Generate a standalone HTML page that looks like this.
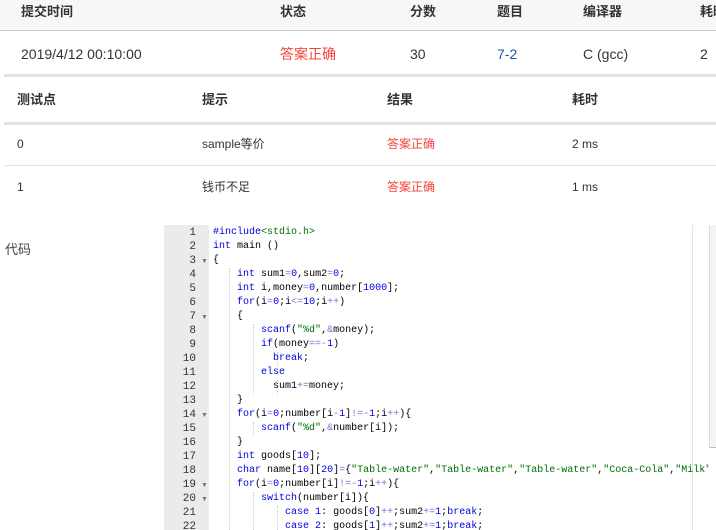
<!DOCTYPE html>
<html><head><meta charset="utf-8"><style>
*{margin:0;padding:0;box-sizing:border-box}
body{width:716px;height:530px;overflow:hidden;background:#fff;font-family:"Liberation Sans","Noto Sans CJK SC",sans-serif;font-size:13px;color:#333;position:relative}
.a{position:absolute;white-space:nowrap;line-height:16px}
.h{font-weight:bold;color:#333}
.big{font-size:14px}
.red{color:#f5433b}
.code{position:absolute;left:164px;top:225px;width:545px;height:305px;overflow:hidden;background:#fff}
.gut{position:absolute;left:0;top:0;width:45px;height:305px;background:#ebebeb}
.ln{position:absolute;left:0;width:32px;text-align:right;font-family:"Liberation Mono",monospace;font-size:11px;color:#333;line-height:14px;margin-top:1px}
.fold{position:absolute;left:37px;font-size:7px;color:#777;margin-top:2px}
.cl{position:absolute;left:49px;font-family:"Liberation Mono",monospace;font-size:10px;white-space:pre;color:#000;line-height:14px;margin-top:1px}
.k{color:#0000e0}.n{color:#0000e0}.s{color:#007000}.o{color:#6a7dd6}
.g{position:absolute;width:0;border-left:1px dotted #ccc}
</style></head><body>
<div class="a" style="left:0;top:0;width:716px;height:31px;background:#f7f7f7;border-bottom:1px solid #c8c8c8"></div>
<div class="a h" style="left:21px;top:4px">提交时间</div>
<div class="a h" style="left:280px;top:4px">状态</div>
<div class="a h" style="left:410px;top:4px">分数</div>
<div class="a h" style="left:497px;top:4px">题目</div>
<div class="a h" style="left:583px;top:4px">编译器</div>
<div class="a h" style="left:700px;top:4px">耗时</div>
<div class="a big" style="left:21px;top:46px">2019/4/12 00:10:00</div>
<div class="a red big" style="left:280px;top:46px">答案正确</div>
<div class="a big" style="left:410px;top:46px">30</div>
<div class="a big" style="left:497px;top:46px;color:#1d5aa8">7-2</div>
<div class="a big" style="left:583px;top:46px">C (gcc)</div>
<div class="a big" style="left:700px;top:46px">2</div>
<div class="a" style="left:4px;top:74px;width:712px;height:3px;background:#e3e4e8"></div>
<div class="a h" style="left:17px;top:92px">测试点</div>
<div class="a h" style="left:202px;top:92px">提示</div>
<div class="a h" style="left:387px;top:92px">结果</div>
<div class="a h" style="left:572px;top:92px">耗时</div>
<div class="a" style="left:4px;top:122px;width:712px;height:3px;background:#e3e4e8"></div>
<div class="a" style="left:17px;top:136px;font-size:12px">0</div>
<div class="a" style="left:202px;top:136px;font-size:12px">sample等价</div>
<div class="a red" style="left:387px;top:136px;font-size:12px">答案正确</div>
<div class="a" style="left:572px;top:136px;font-size:12px">2 ms</div>
<div class="a" style="left:4px;top:165px;width:712px;height:1px;background:#e3e4e8"></div>
<div class="a" style="left:17px;top:179px;font-size:12px">1</div>
<div class="a" style="left:202px;top:179px;font-size:12px">钱币不足</div>
<div class="a red" style="left:387px;top:179px;font-size:12px">答案正确</div>
<div class="a" style="left:572px;top:179px;font-size:12px">1 ms</div>
<div class="a" style="left:5px;top:242px;font-size:13px;color:#444">代码</div>
<div class="a" style="left:709px;top:225px;width:7px;height:223px;background:#f4f4f4;border-left:1px solid #ddd;border-bottom:1px solid #bbb"></div>
<div class="code">
<div class="gut"></div>
<div class="a" style="left:528px;top:0;width:1px;height:305px;background:#e4e4e4"></div>
</div>
<div class="code" style="background:none">
<div class="ln" style="top:0px">1</div><div class="ln" style="top:14px">2</div><div class="ln" style="top:28px">3</div><div class="ln" style="top:42px">4</div><div class="ln" style="top:56px">5</div><div class="ln" style="top:70px">6</div><div class="ln" style="top:84px">7</div><div class="ln" style="top:98px">8</div><div class="ln" style="top:112px">9</div><div class="ln" style="top:126px">10</div><div class="ln" style="top:140px">11</div><div class="ln" style="top:154px">12</div><div class="ln" style="top:168px">13</div><div class="ln" style="top:182px">14</div><div class="ln" style="top:196px">15</div><div class="ln" style="top:210px">16</div><div class="ln" style="top:224px">17</div><div class="ln" style="top:238px">18</div><div class="ln" style="top:252px">19</div><div class="ln" style="top:266px">20</div><div class="ln" style="top:280px">21</div><div class="ln" style="top:294px">22</div>
<div class="fold" style="top:31px">▼</div><div class="fold" style="top:87px">▼</div><div class="fold" style="top:185px">▼</div><div class="fold" style="top:255px">▼</div><div class="fold" style="top:269px">▼</div>
<div class="g" style="left:65px;top:43px;height:262px"></div>
<div class="g" style="left:89px;top:99px;height:70px"></div>
<div class="g" style="left:89px;top:197px;height:14px"></div>
<div class="g" style="left:89px;top:267px;height:38px"></div>
<div class="g" style="left:113px;top:127px;height:14px"></div>
<div class="g" style="left:113px;top:155px;height:14px"></div>
<div class="g" style="left:113px;top:281px;height:24px"></div>
<div class="cl" style="top:0px"><span class="k">#include</span><span class="s">&lt;stdio.h&gt;</span></div>
<div class="cl" style="top:14px"><span class="k">int</span> main ()</div>
<div class="cl" style="top:28px">{</div>
<div class="cl" style="top:42px">    <span class="k">int</span> sum1<span class="o">=</span><span class="n">0</span>,sum2<span class="o">=</span><span class="n">0</span>;</div>
<div class="cl" style="top:56px">    <span class="k">int</span> i,money<span class="o">=</span><span class="n">0</span>,number[<span class="n">1000</span>];</div>
<div class="cl" style="top:70px">    <span class="k">for</span>(i<span class="o">=</span><span class="n">0</span>;i<span class="o">&lt;=</span><span class="n">10</span>;i<span class="o">++</span>)</div>
<div class="cl" style="top:84px">    {</div>
<div class="cl" style="top:98px">        <span class="k">scanf</span>(<span class="s">"%d"</span>,<span class="o">&amp;</span>money);</div>
<div class="cl" style="top:112px">        <span class="k">if</span>(money<span class="o">==-</span><span class="n">1</span>)</div>
<div class="cl" style="top:126px">          <span class="k">break</span>;</div>
<div class="cl" style="top:140px">        <span class="k">else</span></div>
<div class="cl" style="top:154px">          sum1<span class="o">+=</span>money;</div>
<div class="cl" style="top:168px">    }</div>
<div class="cl" style="top:182px">    <span class="k">for</span>(i<span class="o">=</span><span class="n">0</span>;number[i<span class="o">-</span><span class="n">1</span>]<span class="o">!=-</span><span class="n">1</span>;i<span class="o">++</span>){</div>
<div class="cl" style="top:196px">        <span class="k">scanf</span>(<span class="s">"%d"</span>,<span class="o">&amp;</span>number[i]);</div>
<div class="cl" style="top:210px">    }</div>
<div class="cl" style="top:224px">    <span class="k">int</span> goods[<span class="n">10</span>];</div>
<div class="cl" style="top:238px">    <span class="k">char</span> name[<span class="n">10</span>][<span class="n">20</span>]<span class="o">=</span>{<span class="s">"Table-water"</span>,<span class="s">"Table-water"</span>,<span class="s">"Table-water"</span>,<span class="s">"Coca-Cola"</span>,<span class="s">"Milk"</span>,</div>
<div class="cl" style="top:252px">    <span class="k">for</span>(i<span class="o">=</span><span class="n">0</span>;number[i]<span class="o">!=-</span><span class="n">1</span>;i<span class="o">++</span>){</div>
<div class="cl" style="top:266px">        <span class="k">switch</span>(number[i]){</div>
<div class="cl" style="top:280px">            <span class="k">case</span> <span class="n">1</span>: goods[<span class="n">0</span>]<span class="o">++</span>;sum2<span class="o">+=</span><span class="n">1</span>;<span class="k">break</span>;</div>
<div class="cl" style="top:294px">            <span class="k">case</span> <span class="n">2</span>: goods[<span class="n">1</span>]<span class="o">++</span>;sum2<span class="o">+=</span><span class="n">1</span>;<span class="k">break</span>;</div>
</div>
</body></html>
